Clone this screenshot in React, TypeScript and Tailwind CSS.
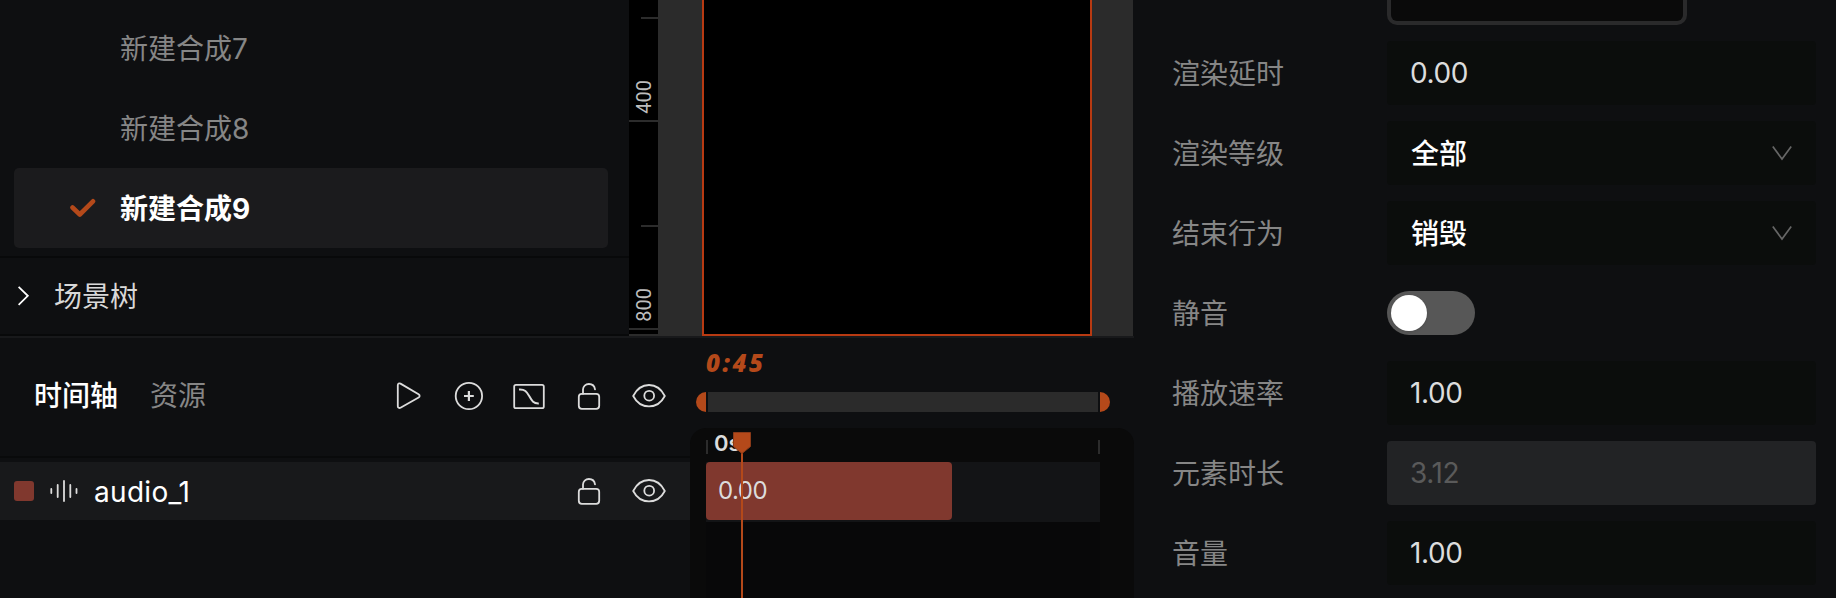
import { ReactNode } from 'react';

const compositions = [
    { name: '新建合成7', active: false },
    { name: '新建合成8', active: false },
    { name: '新建合成9', active: true },
];

const LockIcon = () => (
    <svg className="w-[34px] h-[34px]" viewBox="0 0 34 34" fill="none" stroke="#dcdcdc" strokeWidth="1.8">
        <rect x="6.8" y="13.8" width="20.4" height="15" rx="3" />
        <path d="M11 13.8V9.6C11 6.4 13.6 4 16.9 4C20.2 4 22.6 6.2 23 9.4" strokeLinecap="round" />
    </svg>
);

const EyeIcon = () => (
    <svg className="w-[34px] h-[34px]" viewBox="0 0 34 34" fill="none" stroke="#dcdcdc" strokeWidth="1.8">
        <path d="M1.2 16C4.6 9.2 10.4 5 17 5C23.6 5 29.4 9.2 32.8 16C29.4 22.6 23.6 26.4 17 26.4C10.4 26.4 4.6 22.6 1.2 16Z" strokeLinejoin="round" />
        <circle cx="17.2" cy="15.7" r="4.9" />
    </svg>
);

const PlayIcon = () => (
    <svg className="w-[34px] h-[34px]" viewBox="0 0 34 34" fill="none" stroke="#dcdcdc" strokeWidth="1.8" strokeLinejoin="round">
        <path d="M5.8 5.2C5.8 3.7 7.2 2.9 8.5 3.6L26.6 14.2C28 15.1 28 16.7 26.6 17.5L8.5 27.7C7.2 28.4 5.8 27.7 5.8 26.2Z" />
    </svg>
);

const AddIcon = () => (
    <svg className="w-[34px] h-[34px]" viewBox="0 0 34 34" fill="none" stroke="#dcdcdc">
        <circle cx="16.9" cy="16" r="13.2" strokeWidth="1.8" />
        <path d="M12 16H21.8M16.9 11V21" strokeWidth="2.2" />
    </svg>
);

const CurveIcon = () => (
    <svg className="w-[34px] h-[34px]" viewBox="0 0 34 34" fill="none" stroke="#dcdcdc">
        <rect x="2.2" y="4.8" width="29.6" height="23.4" rx="1.8" strokeWidth="1.8" />
        <path d="M7 9.6C13 9.2 14.5 11.5 17.5 16.5C20 21 21.5 23.6 26.8 23.4" strokeWidth="2" />
    </svg>
);

const WaveIcon = () => (
    <svg className="w-7 h-6" viewBox="0 0 28 24" stroke="#dcdcdc" strokeWidth="1.8" strokeLinecap="round">
        <path d="M1.3 10V14M7.7 6V18M14 2V22M20.3 6V18M26.5 10V14" />
    </svg>
);

const ChevronDown = () => (
    <svg className="w-5 h-4" viewBox="0 0 20 16" fill="none" stroke="#666" strokeWidth="1.7">
        <path d="M0.8 1.5L10 14L19.2 1.5" />
    </svg>
);

const SceneTree = () => (
    <div className="w-[629px] flex flex-col">
        <div className="pt-2 pl-[14px] pr-[21px] pb-2">
            {compositions.map((item) => (
                <div
                    key={item.name}
                    className={`h-20 flex items-center rounded-[5px] ${item.active ? 'bg-[#1b1b1d] text-white font-bold' : 'text-[#868686]'}`}
                >
                    <div className="w-[106px] pl-14">
                        {item.active && (
                            <svg className="w-[26px] h-5" viewBox="0 0 26 20" fill="none" stroke="#b4491a" strokeWidth="4.6" strokeLinecap="round" strokeLinejoin="round">
                                <path d="M2.5 9.5L9.8 16.5L23 3.3" />
                            </svg>
                        )}
                    </div>
                    <span className="pt-0.5">{item.name}</span>
                </div>
            ))}
        </div>
        <div className="h-20 border-y-2 border-[#08090a] flex items-center pl-[18px] text-[#d8d8d8]">
            <svg className="w-3 h-5 mr-6" viewBox="0 0 12 20" fill="none" stroke="#fff" strokeWidth="1.8">
                <path d="M0.6 0.8L9.8 9.8L0.6 18.8" />
            </svg>
            <span className="pt-0.5">场景树</span>
        </div>
    </div>
);

const Ruler = () => (
    <div className="w-[29px] h-[334px] bg-black flex flex-col items-end text-[20px] text-[#bdbdbd]">
        <div className="w-[17px] h-0.5 mt-[17px] bg-[#2c2c2c]" />
        <div className="h-[101px] w-full flex items-end justify-center pl-px pb-[6px]">
            <span className="[writing-mode:vertical-rl] rotate-180 leading-none font-[Roboto]">400</span>
        </div>
        <div className="w-full h-0.5 bg-[#2c2c2c]" />
        <div className="w-[17px] h-0.5 mt-[103px] bg-[#2c2c2c]" />
        <div className="h-[101px] w-full flex items-end justify-center pl-px pb-[6px]">
            <span className="[writing-mode:vertical-rl] rotate-180 leading-none font-[Roboto]">800</span>
        </div>
        <div className="w-full h-0.5 bg-[#2c2c2c]" />
    </div>
);

const Stage = () => (
    <div className="flex-1 flex bg-[#2b2b2b]">
        <Ruler />
        <div className="flex-1 pl-11 pr-[41px] flex">
            <div className="flex-1 bg-black border-2 border-t-0 border-[#b83a12]" />
        </div>
    </div>
);

const TrackList = () => (
    <div className="w-[690px] flex flex-col">
        <div className="h-[120px] flex items-center border-b-2 border-[#090a0b] pl-[34px] pr-6 pb-0.5">
            <span className="text-white font-medium">时间轴</span>
            <span className="text-[#868686] ml-8">资源</span>
            <div className="ml-auto flex gap-[26px] mt-0.5">
                <PlayIcon />
                <AddIcon />
                <CurveIcon />
                <LockIcon />
                <EyeIcon />
            </div>
        </div>
        <div className="h-[58px] mt-1 bg-[#18191b] flex items-center pl-[14px] pr-6">
            <div className="size-5 rounded-[3px] bg-[#80382e]" />
            <div className="ml-4"><WaveIcon /></div>
            <span className="ml-4 pt-0.5 text-white tracking-[0.3px]">audio_1</span>
            <div className="ml-auto flex gap-[26px] mt-px">
                <LockIcon />
                <EyeIcon />
            </div>
        </div>
    </div>
);

const Timeline = () => (
    <div className="w-[444px] flex flex-col">
        <div className="h-[54px] pl-4 pt-[9px] text-[24px] leading-[32px] font-extrabold italic tracking-[2.6px] text-[#b4491a] font-['Open_Sans']">
            0:45
        </div>
        <div className="h-5 flex pl-1.5 gap-0.5">
            <div className="w-2.5 h-5 rounded-l-full bg-[#b4491a]" />
            <div className="w-[390px] h-5 bg-[#2b2b2b]" />
            <div className="w-2.5 h-5 rounded-r-full bg-[#b4491a]" />
        </div>
        <div className="relative mt-4 flex-1 rounded-t-2xl bg-[#0a0a0a] pl-4 pr-[34px] flex flex-col">
            <div className="h-[34px] flex justify-between pt-3">
                <div className="h-[14px] border-l-2 border-[#2c2c2c] pl-1.5 flex items-center text-[22px] font-semibold leading-none text-[#dcdcdc]">
                    <span className="-mt-2">0s</span>
                </div>
                <div className="h-[14px] w-0.5 bg-[#2c2c2c]" />
            </div>
            <div className="h-[60px] bg-[#131416]">
                <div className="w-[246px] h-[58px] rounded bg-[#80382e] flex items-center pl-3 text-[24px] tracking-[-0.5px] text-[#dcdcdc]">
                    0.00
                </div>
            </div>
            <div className="flex-1 bg-[#080809]" />
            {/* playhead */}
            <svg className="absolute left-[43px] top-1 w-[18px] h-[168px]" viewBox="0 0 18 168">
                <path d="M8 20H10V168H8Z" fill="#b4491a" />
                <path d="M0.5 0.5H17.5V14.5L9 21.5L0.5 14.5Z" fill="#b4491a" stroke="#8a3a18" />
            </svg>
        </div>
    </div>
);

const Field = ({ label, children }: { label: string, children: ReactNode }) => (
    <div className="h-16 flex items-center">
        <span className="w-[215px] pt-0.5 text-[#868686]">{label}</span>
        {children}
    </div>
);

const NumberBox = ({ value, disabled }: { value: string, disabled?: boolean }) => (
    <div className={`w-[429px] h-16 rounded flex items-center pl-[23px] tracking-[-0.4px] ${disabled ? 'bg-[#222325] text-[#5a5a5a]' : 'bg-[#0b0d0c] text-[#dcdcdc]'}`}>
        {value}
    </div>
);

const SelectBox = ({ value }: { value: string }) => (
    <div className="w-[429px] h-16 rounded flex items-center justify-between px-6 bg-[#0b0d0c] text-white font-medium">
        <span className="pt-0.5">{value}</span>
        <ChevronDown />
    </div>
);

const Inspector = () => (
    <div className="flex-1 pl-[38px] flex flex-col">
        <div className="ml-[215px] w-[300px] h-[25px] rounded-b-[10px] border-4 border-t-0 border-[#2a2a2b] bg-[#0a0a0a]" />
        <div className="mt-4 flex flex-col gap-4">
            <Field label="渲染延时"><NumberBox value="0.00" /></Field>
            <Field label="渲染等级"><SelectBox value="全部" /></Field>
            <Field label="结束行为"><SelectBox value="销毁" /></Field>
            <Field label="静音">
                <div className="w-[88px] h-11 rounded-full bg-[#575757] p-1">
                    <div className="size-9 rounded-full bg-white shadow" />
                </div>
            </Field>
            <Field label="播放速率"><NumberBox value="1.00" /></Field>
            <Field label="元素时长"><NumberBox value="3.12" disabled /></Field>
            <Field label="音量"><NumberBox value="1.00" /></Field>
        </div>
    </div>
);

const App = () => {
    return (
        <div className="w-[1836px] h-[598px] overflow-hidden flex bg-[#0e0f11] text-[28px] leading-[40px] font-[Inter,'Noto_Sans_CJK_SC',sans-serif]">
            <div className="w-[1134px] flex flex-col">
                <div className="h-[336px] flex pr-px">
                    <SceneTree />
                    <Stage />
                </div>
                <div className="flex-1 flex border-t-2 border-[#18191b]">
                    <TrackList />
                    <Timeline />
                </div>
            </div>
            <Inspector />
        </div>
    );
};

export default App;
